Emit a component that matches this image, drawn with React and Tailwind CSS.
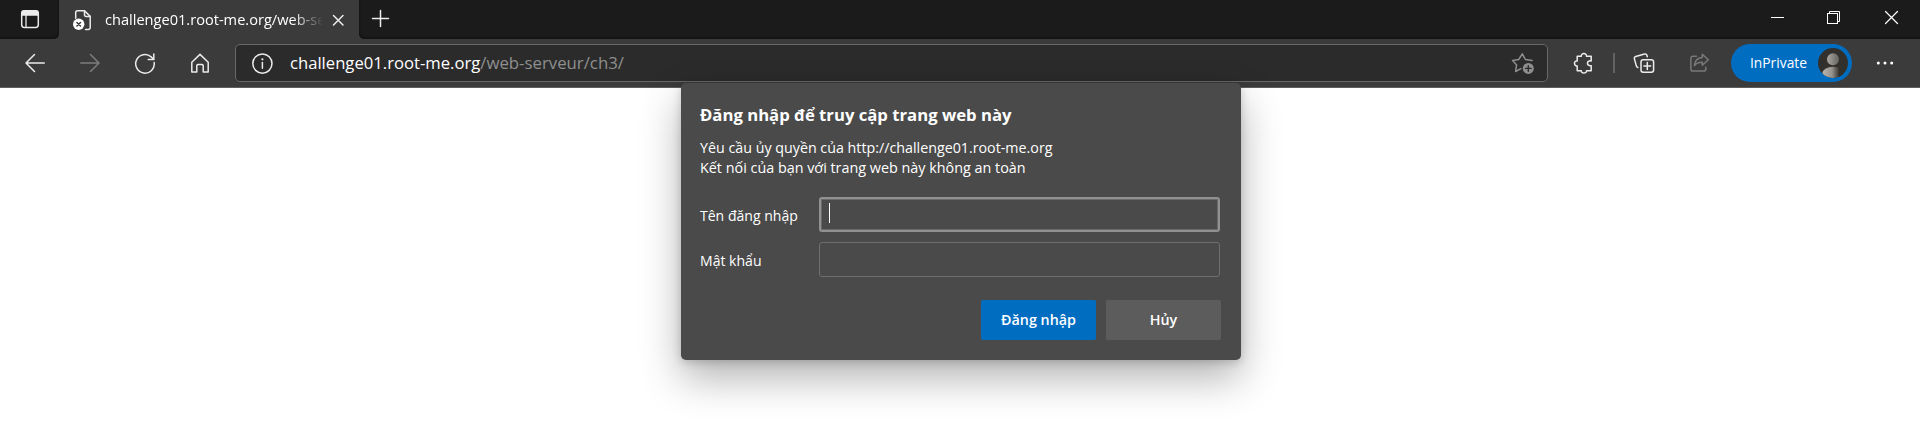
function Icon({ x, y, w, h, className = "", tone = "text-[#ececec]", children }) {
  return (
    <svg
      width={w}
      height={h}
      viewBox={`${x} ${y} ${w} ${h}`}
      fill="none"
      stroke="currentColor"
      strokeWidth="1.5"
      strokeLinecap="round"
      strokeLinejoin="round"
      className={`block shrink-0 ${tone} ${className}`}
    >
      {children}
    </svg>
  );
}

function TabStrip() {
  return (
    <div className="flex h-[39px] bg-[#3b3b3b]">
      <div className="flex w-[59px] items-center rounded-br-[5px] bg-[#1b1b1b] pl-5 shadow-[inset_-1px_-2px_2px_rgba(0,0,0,0.25)]">
        <Icon x={20} y={9} w={20} h={21}>
          <rect x="21.7" y="10.8" width="16.6" height="16.6" rx="2.6" />
          <path d="M22 15v-1.6a2.4 2.4 0 0 1 2.4-2.4h11.2a2.4 2.4 0 0 1 2.4 2.4V15z" fill="currentColor" />
          <path d="M26 15v12" strokeWidth="1.3" />
        </Icon>
      </div>
      <div className="flex w-[300px] items-center pl-[13px]">
        <Icon x={72} y={8} w={20} h={22}>
          <path d="M75.7 17.3V11.5a1.8 1.8 0 0 1 1.8-1.8H84.5L90.2 15.4V26.6a1.8 1.8 0 0 1-1.8 1.8H85.5" />
          <path d="M84.5 9.7V14a1.5 1.5 0 0 0 1.5 1.5h4.2" />
          <circle cx="78.7" cy="23.2" r="5.7" fill="white" stroke="none" />
          <path d="M76.9 21.4l3.6 3.6M80.5 21.4L76.9 25" stroke="#333333" strokeWidth="1.4" />
        </Icon>
        <div className="ml-[13px] w-[218px] pb-px text-[14.6px] leading-6 whitespace-nowrap text-white [mask-image:linear-gradient(to_right,black_86%,transparent_100%)]">
          challenge01.root-me.org/web-se
        </div>
        <Icon x={331} y={12} w={14} h={14} className="ml-[8px]">
          <path d="M333.5 14.5l9.5 9.5M343 14.5l-9.5 9.5" />
        </Icon>
      </div>
      <div className="flex flex-1 items-center rounded-bl-[5px] bg-[#1b1b1b] pl-3 shadow-[inset_1px_-2px_2px_rgba(0,0,0,0.25)]">
        <Icon x={371} y={9} w={20} h={20} className="mb-px">
          <path d="M380.5 10.5v16M372.5 18.5h16" />
        </Icon>
        <div className="ml-auto flex items-center pr-[21px]">
          <Icon x={1770} y={10} w={16} h={16} tone="text-white" className="mb-[3px]">
            <path d="M1771 17.5h13" strokeWidth="1" strokeLinecap="butt" />
          </Icon>
          <Icon x={1826} y={10} w={16} h={16} tone="text-white" className="mb-[3px] ml-10">
            <g strokeWidth="1" strokeLinejoin="miter">
              <rect x="1827.5" y="13.5" width="10" height="10" />
              <path d="M1829.5 13.5v-2h10v10h-2" />
            </g>
          </Icon>
          <Icon x={1884} y={10} w={15} h={16} tone="text-white" className="mb-[3px] ml-[42px]">
            <path d="M1885.5 11.5l12 12M1897.5 11.5l-12 12" strokeWidth="1.2" />
          </Icon>
        </div>
      </div>
    </div>
  );
}

function Toolbar() {
  return (
    <div className="flex h-[49px] items-center border-b border-[#5e5e5e] bg-[#3b3b3b] pl-[25px]">
      <Icon x={25} y={51} w={20} h={22}>
        <path d="M44.3 62H26M34.5 53.5L26 62l8.5 8.5" />
      </Icon>
      <Icon x={80} y={51} w={20} h={22} tone="text-[#7d7d7d]" className="ml-[35px]">
        <path d="M80.7 62H99M90.5 53.5L99 62l-8.5 8.5" />
      </Icon>
      <Icon x={134} y={51} w={22} h={23} className="ml-[34px]">
        <path d="M154.2 61.5A9.3 9.3 0 1 1 151.2 55.9L153.6 58.2" />
        <path d="M153.8 53v5.6h-5.6" />
      </Icon>
      <Icon x={190} y={51} w={20} h={23} className="ml-[34px]">
        <path d="M191.8 61.2L200 53.4l8.2 7.8V70.9h-5V64.8a1.2 1.2 0 0 0-1.2-1.2h-4a1.2 1.2 0 0 0-1.2 1.2v6.1h-5z" />
      </Icon>
      <div className="ml-[25px] flex h-[38px] w-[1313px] items-center rounded-[5px] border border-[#686868] bg-[#2b2b2b] pr-[12px] pl-[15px]">
        <Icon x={251} y={51} w={23} h={23}>
          <circle cx="262.4" cy="62.6" r="9.6" />
          <path d="M262.4 61.5v5.7" />
          <circle cx="262.4" cy="58.3" r="1.1" fill="currentColor" stroke="none" />
        </Icon>
        <div className="ml-[16px] text-[16.65px] leading-6 text-white">
          challenge01.root-me.org<span className="text-[16.8px] text-[#8f8f8f]">/web-serveur/ch3/</span>
        </div>
        <Icon x={1511} y={51} w={24} h={24} tone="text-[#8e8e8e]" className="ml-auto">
          <path d="M1520.9 68.6l-5.3 2.9 1-6.6-4-4.5 6.1-.9 3.6-5.6 3.1 5.6 6.8.9" />
          <circle cx="1528.3" cy="68.4" r="5.5" fill="currentColor" stroke="none" />
          <path d="M1528.3 65.6v5.6M1525.5 68.4h5.6" stroke="#2b2b2b" strokeWidth="1.4" />
        </Icon>
      </div>
      <Icon x={1573} y={51} w={20} h={24} className="ml-[25px]">
        <path d="M1577.2 56.3h4.1c-.4-3.6 5.6-3.6 5.2 0h4.7v4.6c-5-.8-5 5.6 0 4.8v5h-4.7c.4 3.2-5.6 3.2-5.2 0h-4.1v-4.8c-3.6.3-3.6-5.4 0-5z" />
      </Icon>
      <div className="ml-[20px] h-5 w-[2px] bg-[#626262]" />
      <Icon x={1633} y={51} w={22} h={24} className="ml-[18px]">
        <rect x="1641" y="59.8" width="12.6" height="12.4" rx="2.2" />
        <path d="M1647.3 62.6v6.8M1643.9 66h6.8" />
        <path d="M1637.8 67.5c-.9-.2-1.2-.8-1.4-1.4l-2-7.2a1.9 1.9 0 0 1 1.3-2.4l8.8-2.5a1.9 1.9 0 0 1 2.4 1.3l.4 1.4" />
      </Icon>
      <Icon x={1689} y={51} w={21} h={24} tone="text-[#797979]" className="ml-[34px]">
        <path d="M1696.5 56.3h-3.4a2.2 2.2 0 0 0-2.2 2.2v10.4a2.2 2.2 0 0 0 2.2 2.2h10.5a2.2 2.2 0 0 0 2.2-2.2v-1.6" />
        <path d="M1702.3 54.3l6 5.5-6 5.5v-3.1c-3.7-.2-6.2 1-7.9 3.5.3-4.9 3.2-7.9 7.9-8.3z" />
      </Icon>
      <div className="ml-[21px] flex h-[38px] w-[121px] items-center rounded-full bg-[#006dc1] pl-[19px] text-[13.8px] text-white">
        InPrivate
        <svg width="30" height="30" viewBox="0 0 30 30" className="mr-[4px] ml-auto block shrink-0">
          <defs>
            <linearGradient id="head" x1="0" x2="1">
              <stop offset="0" stopColor="#aaa7a2" />
              <stop offset="1" stopColor="#66645f" />
            </linearGradient>
            <linearGradient id="body" x1="0" x2="1">
              <stop offset="0" stopColor="#b8b5b1" />
              <stop offset="0.45" stopColor="#96938f" />
              <stop offset="0.8" stopColor="#32302c" />
            </linearGradient>
            <clipPath id="disc">
              <circle cx="15" cy="15" r="15" />
            </clipPath>
          </defs>
          <g clipPath="url(#disc)">
            <rect width="30" height="30" fill="#32302c" />
            <ellipse cx="15" cy="25.8" rx="10.8" ry="7" fill="url(#body)" />
            <circle cx="15" cy="11.2" r="6" fill="url(#head)" />
          </g>
        </svg>
      </div>
      <Icon x={1876} y={58} w={18} h={10} tone="text-white" className="ml-[24px]">
        <g fill="currentColor" stroke="none">
          <circle cx="1878.3" cy="63" r="1.5" />
          <circle cx="1885" cy="63" r="1.5" />
          <circle cx="1891.7" cy="63" r="1.5" />
        </g>
      </Icon>
    </div>
  );
}

function LoginDialog() {
  return (
    <div className="absolute top-[83px] left-[681px] h-[277px] w-[560px] rounded-[5px] bg-[#4a4a4a] pt-5 pr-5 pl-[19px] text-white shadow-[0_18px_40px_rgba(0,0,0,0.3),0_2px_10px_rgba(0,0,0,0.18)]">
      <h1 className="text-[16.7px] leading-6 font-bold whitespace-nowrap">Đăng nhập để truy cập trang web này</h1>
      <div className="mt-[11px] text-[14.27px] leading-5 whitespace-nowrap">
        <p>Yêu cầu ủy quyền của http://challenge01.root-me.org</p>
        <p className="text-[14.37px]">Kết nối của bạn với trang web này không an toàn</p>
      </div>
      <div className="mt-[19px] grid grid-cols-[119px_401px] gap-y-[10px] text-[14.05px]">
        <label className="flex h-[35px] items-center pt-[2px]">Tên đăng nhập</label>
        <div className="flex h-[35px] rounded-[3px] border-2 border-[#919191] pt-1 pl-2 shadow-[inset_0_0_0_1px_#6a6a6a]">
          <div className="h-5 w-px bg-white" />
        </div>
        <label className="flex h-[35px] items-center pt-[2px]">Mật khẩu</label>
        <div className="h-[35px] rounded-[3px] border border-[#6e6e6e]" />
      </div>
      <div className="mt-[23px] flex justify-end gap-[10px] text-[14.3px] font-semibold">
        <button className="h-10 w-[115px] rounded-[2px] bg-[#006dc1]">Đăng nhập</button>
        <button className="h-10 w-[115px] rounded-[2px] bg-[#5c5c5c]">Hủy</button>
      </div>
    </div>
  );
}

export default function App() {
  return (
    <div className="relative h-[430px] w-[1920px] overflow-hidden bg-white font-['Open_Sans','Noto_Sans',sans-serif]">
      <TabStrip />
      <Toolbar />
      <LoginDialog />
    </div>
  );
}
